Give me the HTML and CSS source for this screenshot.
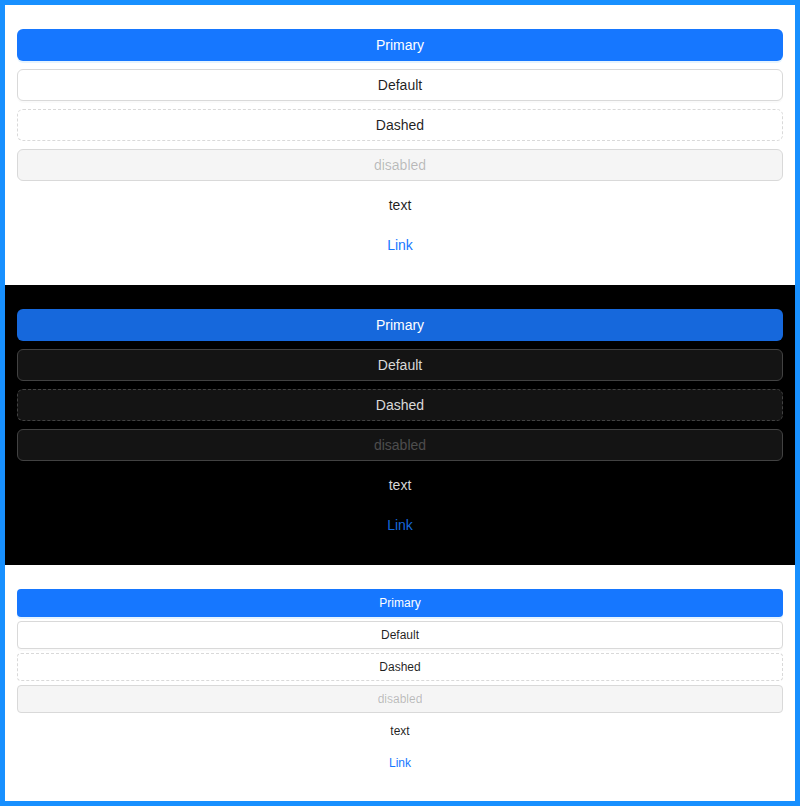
FILE: index.html
```html
<!DOCTYPE html>
<html>
<head>
<meta charset="utf-8">
<link rel="stylesheet" href="styles.css">
</head>
<body>
<div class="frame">
  <section class="panel light">
    <button class="btn primary">Primary</button>
    <button class="btn default">Default</button>
    <button class="btn dashed">Dashed</button>
    <button class="btn disabled" disabled>disabled</button>
    <button class="btn text">text</button>
    <button class="btn link">Link</button>
  </section>
  <section class="panel dark">
    <button class="btn primary">Primary</button>
    <button class="btn default">Default</button>
    <button class="btn dashed">Dashed</button>
    <button class="btn disabled" disabled>disabled</button>
    <button class="btn text">text</button>
    <button class="btn link">Link</button>
  </section>
  <section class="panel light small">
    <button class="btn primary">Primary</button>
    <button class="btn default">Default</button>
    <button class="btn dashed">Dashed</button>
    <button class="btn disabled" disabled>disabled</button>
    <button class="btn text">text</button>
    <button class="btn link">Link</button>
  </section>
</div>
</body>
</html>
```
FILE: styles.css
```css
html, body { margin: 0; padding: 0; }
body {
  font-family: "Liberation Sans", Arial, sans-serif;
  background: #fff;
}
.frame {
  border: 5px solid #1890ff;
  width: 790px;
  height: 796px;
  display: flex;
  flex-direction: column;
}
.panel {
  padding: 24px 12px;
  display: flex;
  flex-direction: column;
  gap: 8px;
}
.light { background: #fff; }
.dark { background: #000; }
.btn {
  font-family: inherit;
  font-size: 14px;
  height: 32px;
  border-radius: 6px;
  border: 1px solid transparent;
  background: transparent;
  padding: 0 15px;
  margin: 0;
  cursor: pointer;
  line-height: 1;
}
.small { gap: 4px; }
.small .btn {
  font-size: 12px;
  height: 28px;
  border-radius: 4px;
}
.light .primary {
  background: #1677ff;
  color: #fff;
  box-shadow: 0 2px 0 rgba(5, 145, 255, 0.1);
}
.light .default {
  background: #fff;
  border-color: #d9d9d9;
  color: rgba(0, 0, 0, 0.88);
  box-shadow: 0 2px 0 rgba(0, 0, 0, 0.02);
}
.light .dashed {
  background: #fff;
  border: 1px dashed #d9d9d9;
  color: rgba(0, 0, 0, 0.88);
}
.light .disabled {
  background: rgba(0, 0, 0, 0.04);
  border-color: #d9d9d9;
  color: rgba(0, 0, 0, 0.25);
  cursor: not-allowed;
}
.light .text { color: rgba(0, 0, 0, 0.88); }
.light .link { color: #1677ff; }

.dark .primary {
  background: #1668dc;
  color: #fff;
}
.dark .default {
  background: #141414;
  border-color: #424242;
  color: rgba(255, 255, 255, 0.85);
}
.dark .dashed {
  background: #141414;
  border: 1px dashed #424242;
  color: rgba(255, 255, 255, 0.85);
}
.dark .disabled {
  background: #141414;
  border-color: #424242;
  color: rgba(255, 255, 255, 0.25);
}
.dark .text { color: rgba(255, 255, 255, 0.85); }
.dark .link { color: #1668dc; }
```
